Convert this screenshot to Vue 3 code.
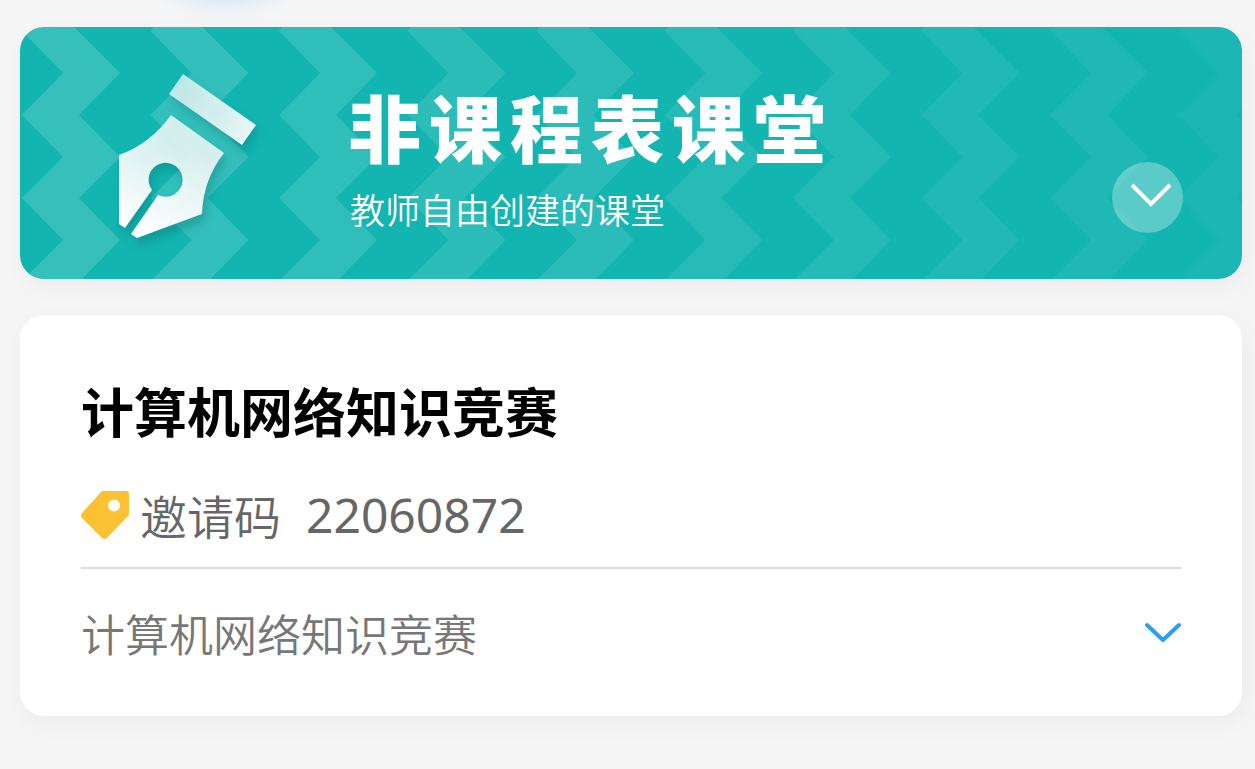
<script setup>
import { ref } from 'vue'

const bands = Array.from({ length: 10 }, (_, i) => ({
  shift: i * 128.5,
  opacity: 0.15 - i * 0.0125,
}))

const groupOpen = ref(true)
const detailOpen = ref(false)

const course = {
  title: '计算机网络知识竞赛',
  codeLabel: '邀请码',
  code: '22060872',
  name: '计算机网络知识竞赛',
}
</script>

<template>
  <main class="page">
    <div class="glow" aria-hidden="true"></div>

    <header class="banner">
      <svg class="pattern" viewBox="0 0 1222 252" preserveAspectRatio="xMinYMid slice" aria-hidden="true">
        <path
          v-for="band in bands"
          :key="band.shift"
          :transform="`translate(${band.shift} 0)`"
          :fill-opacity="band.opacity"
          fill="#fff"
          d="M5 0 2 4 43 46 2 88 43 130 2 171 43 213 4 252H62L100 213 59 171 100 130 59 88 100 46 54 0Z"
        />
      </svg>

      <svg class="pen" viewBox="0 0 140 166" aria-hidden="true">
        <defs>
          <linearGradient id="nib" x1="0.7" y1="0" x2="0.3" y2="1">
            <stop offset="0" stop-color="#fff" stop-opacity="0.76" />
            <stop offset="1" stop-color="#fff" />
          </linearGradient>
          <linearGradient id="cap" x1="0" y1="0" x2="1" y2="0.6">
            <stop offset="0" stop-color="#fff" stop-opacity="0.66" />
            <stop offset="1" stop-color="#fff" stop-opacity="0.9" />
          </linearGradient>
        </defs>
        <path fill="url(#cap)" d="M65 0 138 51 124 71 51 20Z" />
        <path
          fill="url(#nib)"
          d="M53 41 106 79Q85 106 84 140L19 164 13 160 40 121A17 17 0 1 0 34 116L7 154 1 150V81Q32 70 53 41Z"
        />
      </svg>

      <div class="heading">
        <h1>非课程表课堂</h1>
        <p>教师自由创建的课堂</p>
      </div>

      <button
        class="round"
        type="button"
        aria-label="展开或收起"
        :aria-expanded="groupOpen"
        @click="groupOpen = !groupOpen"
      >
        <svg viewBox="0 0 71 71" aria-hidden="true">
          <path d="M20 23 39 42 58 23" fill="none" stroke="#fff" stroke-width="4" />
        </svg>
      </button>
    </header>

    <article class="card">
      <h2>{{ course.title }}</h2>
      <div class="invite">
        <svg class="tag" viewBox="0 0 48 50" aria-hidden="true">
          <path
            fill="#fac132"
            fill-rule="evenodd"
            d="M21 1H45Q48 1 48 4V25L26 48Q23.500 50 21 48L1 28Q-1 25.500 1 23ZM33 9.500A6 6 0 1 0 33 21.500 6 6 0 1 0 33 9.500Z"
          />
        </svg>
        <span class="label">{{ course.codeLabel }}</span>
        <span class="code">{{ course.code }}</span>
      </div>
      <div class="detail">
        <span>{{ course.name }}</span>
        <button
          class="more"
          type="button"
          aria-label="课程详情"
          :aria-expanded="detailOpen"
          @click="detailOpen = !detailOpen"
        >
          <svg viewBox="0 0 36 22" aria-hidden="true">
            <path
              d="M2 3 18 18 34 3"
              fill="none"
              stroke="#2a9df4"
              stroke-width="4"
              stroke-linecap="round"
              stroke-linejoin="round"
            />
          </svg>
        </button>
      </div>
    </article>
  </main>
</template>

<style>
body {
  background: #f5f5f5;
}
</style>

<style scoped>
.page {
  position: relative;
  display: flex;
  flex-direction: column;
  gap: 36px;
  padding: 27px 13px 53px 20px;
  overflow: hidden;
  font-family: "Noto Sans CJK SC", sans-serif;
}

h1,
h2,
p {
  margin: 0;
}

button {
  padding: 0;
  border: 0;
  background: none;
  cursor: pointer;
}

svg {
  display: block;
}

.glow {
  position: absolute;
  top: -64px;
  left: 165px;
  width: 120px;
  height: 60px;
  border-radius: 50%;
  box-shadow: 0 0 24px 4px #c4dff8;
}

.banner {
  position: relative;
  display: flex;
  align-items: center;
  min-height: 252px;
  box-sizing: border-box;
  padding: 0 59px 0 98px;
  border-radius: 24px;
  background: #13b5b1;
  box-shadow: 4px 8px 24px rgba(0, 0, 0, 0.04);
}

.pattern {
  position: absolute;
  inset: 0;
  width: 100%;
  height: 100%;
  border-radius: 24px;
}

.pen {
  position: relative;
  flex: none;
  width: 140px;
  height: 166px;
  margin-top: 8px;
  filter: drop-shadow(3px 7px 5px rgba(0, 90, 90, 0.3));
}

.heading {
  position: relative;
  flex: 1;
  margin-left: 90px;
  padding-top: 16px;
  color: #fff;
}

.heading h1 {
  font-size: 73px;
  line-height: 88px;
  font-weight: 900;
  letter-spacing: 8px;
}

.heading p {
  margin-left: 2px;
  padding-top: 8px;
  font-size: 35px;
  line-height: 64px;
  font-weight: 350;
}

.round {
  position: relative;
  flex: none;
  align-self: flex-end;
  width: 71px;
  height: 71px;
  margin-bottom: 46px;
  border-radius: 50%;
  background: rgba(255, 255, 255, 0.3);
}

.card {
  padding: 55px 61px 48px;
  border-radius: 24px;
  background: #fff;
  box-shadow: 4px 8px 24px rgba(0, 0, 0, 0.04);
}

.card h2 {
  color: #000;
  font-size: 53px;
  line-height: 80px;
  font-weight: 700;
}

.invite {
  display: flex;
  align-items: center;
  padding: 30px 0 17px;
  border-bottom: 2px solid #dcdcdc;
  color: #666;
  line-height: 70px;
}

.tag {
  flex: none;
  width: 48px;
  height: 50px;
}

.label {
  margin-left: 11px;
  font-size: 47px;
  font-weight: 350;
}

.code {
  margin-left: 25px;
  font-family: "Noto Sans", sans-serif;
  font-size: 48px;
}

.detail {
  display: flex;
  align-items: center;
  justify-content: space-between;
  padding-top: 29px;
  color: #777;
  font-size: 44px;
  line-height: 70px;
  font-weight: 350;
}

.more {
  flex: none;
  width: 36px;
  height: 22px;
}
</style>
